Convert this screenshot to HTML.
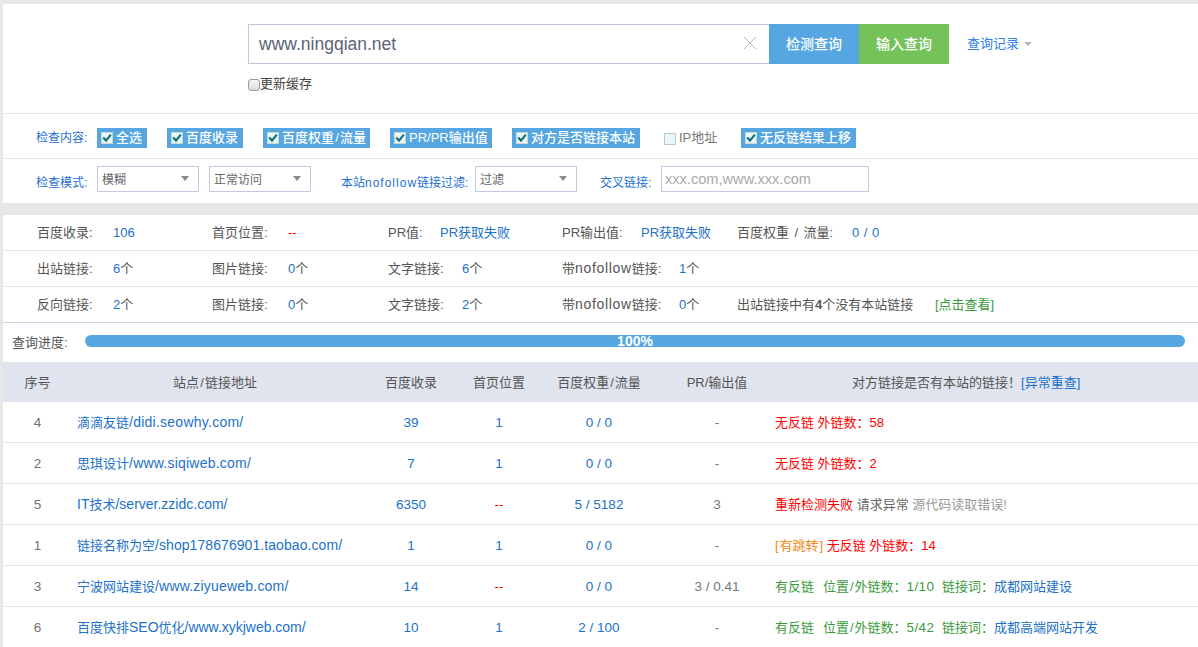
<!DOCTYPE html>
<html lang="zh-CN">
<head>
<meta charset="utf-8">
<title>友情链接检测</title>
<style>
*{box-sizing:border-box;margin:0;padding:0}
html,body{width:1198px;height:647px;overflow:hidden}
body{background:#e7e7e7;font-family:"Liberation Sans","Noto Sans CJK SC",sans-serif;font-size:13px;color:#555;position:relative}
.abs{position:absolute;white-space:nowrap}
.panel{position:absolute;background:#fff;left:3px;right:0}
.hl{position:absolute;left:3px;right:0;height:1px;background:#e8e8e8}
.t{position:absolute;white-space:nowrap;line-height:20px;height:20px}
.blue{color:#2271c8}
.lab{color:#1f6fd2;font-size:12px}
.red{color:#f00 !important}
.green{color:#3c9a3c}
.gray{color:#999}
.chip{position:absolute;top:128px;height:20px;background:#55a6e1;color:#fff;font-size:13px;font-weight:500;line-height:20px;white-space:nowrap}
.chip .cb{position:absolute;left:4px;top:4px;width:12px;height:12px;background:#eef6f4;border:1px solid #c5d8d2;}
.chip .cb svg{position:absolute;left:0;top:0}
.chip span{position:absolute;left:19px;top:0}
.chip em{font-style:normal;margin:0 1.2px}
.sel{position:absolute;top:166px;height:26px;border:1px solid #c2cae0;background:#fff;font-size:12px;color:#666;line-height:26px;padding-left:4px}
.sel i{position:absolute;right:9px;top:9px;width:0;height:0;border-left:4px solid transparent;border-right:4px solid transparent;border-top:5px solid #8a8a8a}
.th{position:absolute;top:373px;height:20px;line-height:20px;font-size:13px;color:#555;text-align:center;white-space:nowrap}
.row{position:absolute;left:3px;right:0;height:41px;border-bottom:1px solid #e8e8e8;font-size:13px}
.row div{position:absolute;top:11px;height:20px;line-height:20px;white-space:nowrap}
.c1{left:0;width:69px;text-align:center;color:#707070;font-size:13.5px}
.c2{left:74px;color:#2271c8}
.c3{left:355px;width:106px;text-align:center;color:#2271c8;font-size:13.5px}
.c4{left:461px;width:70px;text-align:center;color:#2271c8;font-size:13.5px}
.c5{left:531px;width:130px;text-align:center;color:#2271c8;font-size:13.5px}
.c6{left:661px;width:106px;text-align:center;color:#777;font-size:13.5px}
.c7{left:772px}
.d{font-size:13.5px;letter-spacing:.45px;line-height:0}
.L{font-size:14px;line-height:0}
</style>
</head>
<body>
<!-- top panel -->
<div class="panel" style="top:4px;height:199px"></div>
<div class="hl" style="top:113px"></div>
<div class="hl" style="top:158px"></div>

<!-- search -->
<div class="abs" style="left:248px;top:24px;width:521px;height:40px;border:1px solid #bec7de;border-right:none;background:#fff"></div>
<div class="t" style="left:259px;top:33px;font-size:17.5px;line-height:22px;height:22px;color:#5a6478">www.ningqian.net</div>
<svg class="abs" style="left:743px;top:36px" width="14" height="14" viewBox="0 0 14 14"><path d="M1 1L13 13M13 1L1 13" stroke="#b4b4b4" stroke-width="1" fill="none"/></svg>
<div class="abs" style="left:769px;top:24px;width:90px;height:40px;background:#55a6e1;color:#fff;font-size:14px;line-height:40px;text-align:center;font-weight:500">检测查询</div>
<div class="abs" style="left:859px;top:24px;width:90px;height:40px;background:#75c25b;color:#fff;font-size:14px;line-height:40px;text-align:center;font-weight:500">输入查询</div>
<div class="t" style="left:967px;top:34px;color:#2f80e8;font-size:13px">查询记录</div>
<div class="abs" style="left:1024px;top:42px;width:0;height:0;border-left:4px solid transparent;border-right:4px solid transparent;border-top:4px solid #b5b5b5"></div>
<div class="abs" style="left:248px;top:79px;width:12px;height:12px;border:1px solid #9a9a9a;border-radius:3px;background:linear-gradient(#f4f4f4,#dcdcdc)"></div>
<div class="t" style="left:260px;top:74px;font-size:13px;color:#444">更新缓存</div>

<!-- options row 1 -->
<div class="t lab" style="left:36px;top:128px">检查内容:</div>
<div class="chip" style="left:97px;width:50px"><div class="cb"><svg width="10" height="10" viewBox="0 0 10 10"><path d="M1.2 4.6L4 7.6L8.8 1.6" stroke="#0b7285" stroke-width="2.2" fill="none"/></svg></div><span>全选</span></div>
<div class="chip" style="left:167px;width:76px"><div class="cb"><svg width="10" height="10" viewBox="0 0 10 10"><path d="M1.2 4.6L4 7.6L8.8 1.6" stroke="#0b7285" stroke-width="2.2" fill="none"/></svg></div><span>百度收录</span></div>
<div class="chip" style="left:263px;width:107px"><div class="cb"><svg width="10" height="10" viewBox="0 0 10 10"><path d="M1.2 4.6L4 7.6L8.8 1.6" stroke="#0b7285" stroke-width="2.2" fill="none"/></svg></div><span>百度权重<em>/</em>流量</span></div>
<div class="chip" style="left:390px;width:102px"><div class="cb"><svg width="10" height="10" viewBox="0 0 10 10"><path d="M1.2 4.6L4 7.6L8.8 1.6" stroke="#0b7285" stroke-width="2.2" fill="none"/></svg></div><span>PR/PR输出值</span></div>
<div class="chip" style="left:512px;width:128px"><div class="cb"><svg width="10" height="10" viewBox="0 0 10 10"><path d="M1.2 4.6L4 7.6L8.8 1.6" stroke="#0b7285" stroke-width="2.2" fill="none"/></svg></div><span>对方是否链接本站</span></div>
<div class="abs" style="left:664px;top:133px;width:12px;height:12px;background:#ecf4f5;border:1px solid #b4cdd3"></div>
<div class="t" style="left:679px;top:128px;font-size:13px;color:#777">IP地址</div>
<div class="chip" style="left:741px;width:115px"><div class="cb"><svg width="10" height="10" viewBox="0 0 10 10"><path d="M1.2 4.6L4 7.6L8.8 1.6" stroke="#0b7285" stroke-width="2.2" fill="none"/></svg></div><span>无反链结果上移</span></div>

<!-- options row 2 -->
<div class="t lab" style="left:36px;top:173px">检查模式:</div>
<div class="sel" style="left:97px;width:102px">模糊<i></i></div>
<div class="sel" style="left:209px;width:102px">正常访问<i></i></div>
<div class="t lab" style="left:341px;top:173px">本站<span style="letter-spacing:1px">nofollow</span>链接过滤:</div>
<div class="sel" style="left:475px;width:102px">过滤<i></i></div>
<div class="t lab" style="left:600px;top:173px">交叉链接:</div>
<div class="abs" style="left:661px;top:166px;width:208px;height:26px;border:1px solid #c2cae0;background:#fff;font-size:14.6px;line-height:25px;color:#aaa;padding-left:3px">xxx.com,www.xxx.com</div>

<!-- stats panel -->
<div class="panel" style="top:215px;height:432px"></div>
<div class="hl" style="top:250px"></div>
<div class="hl" style="top:286px"></div>
<div class="hl" style="top:322px;background:#cdd4ea"></div>

<div class="t" style="left:37px;top:223px">百度收录:</div><div class="t blue" style="left:113px;top:223px">106</div>
<div class="t" style="left:212px;top:223px">首页位置:</div><div class="t red" style="left:288px;top:223px">--</div>
<div class="t" style="left:388px;top:223px">PR值:</div><div class="t blue" style="left:440px;top:223px">PR获取失败</div>
<div class="t" style="left:562px;top:223px">PR输出值:</div><div class="t blue" style="left:641px;top:223px">PR获取失败</div>
<div class="t" style="left:737px;top:223px">百度权重 <span style="margin:0 1.8px">/</span> 流量:</div><div class="t blue" style="left:852px;top:223px">0 <span style="margin:0 1px">/</span> 0</div>

<div class="t" style="left:37px;top:259px">出站链接:</div><div class="t" style="left:113px;top:259px"><span class="blue">6</span>个</div>
<div class="t" style="left:212px;top:259px">图片链接:</div><div class="t" style="left:288px;top:259px"><span class="blue">0</span>个</div>
<div class="t" style="left:388px;top:259px">文字链接:</div><div class="t" style="left:462px;top:259px"><span class="blue">6</span>个</div>
<div class="t" style="left:562px;top:259px">带<span style="font-size:14px;letter-spacing:.66px;line-height:0">nofollow</span>链接:</div><div class="t" style="left:679px;top:259px"><span class="blue">1</span>个</div>

<div class="t" style="left:37px;top:295px">反向链接:</div><div class="t" style="left:113px;top:295px"><span class="blue">2</span>个</div>
<div class="t" style="left:212px;top:295px">图片链接:</div><div class="t" style="left:288px;top:295px"><span class="blue">0</span>个</div>
<div class="t" style="left:388px;top:295px">文字链接:</div><div class="t" style="left:462px;top:295px"><span class="blue">2</span>个</div>
<div class="t" style="left:562px;top:295px">带<span style="font-size:14px;letter-spacing:.66px;line-height:0">nofollow</span>链接:</div><div class="t" style="left:679px;top:295px"><span class="blue">0</span>个</div>
<div class="t" style="left:737px;top:295px">出站链接中有<b>4</b>个没有本站链接</div>
<div class="t green" style="left:935px;top:295px">[点击查看]</div>

<!-- progress -->
<div class="t" style="left:12px;top:333px">查询进度:</div>
<div class="abs" style="left:85px;top:335px;width:1100px;height:12px;border-radius:6px;background:#55a6e1;color:#fff;font-size:14px;font-weight:bold;line-height:12px;text-align:center">100%</div>

<!-- table header -->
<div class="abs" style="left:3px;right:0;top:362px;height:40px;background:#e0e4ef"></div>
<div class="th" style="left:3px;width:69px">序号</div>
<div class="th" style="left:72px;width:286px">站点<span style="margin:0 1.2px">/</span>链接地址</div>
<div class="th" style="left:358px;width:106px">百度收录</div>
<div class="th" style="left:464px;width:70px">首页位置</div>
<div class="th" style="left:534px;width:130px">百度权重<span style="margin:0 .9px">/</span>流量</div>
<div class="th" style="left:664px;width:106px">PR/输出值</div>
<div class="th" style="left:852px">对方链接是否有本站的链接！<span class="blue">[异常重查]</span></div>

<!-- rows -->
<div class="row" style="top:402px"><div class="c1">4</div><div class="c2">滴滴友链<span class="L" style="letter-spacing:0.25px">/didi.seowhy.com/</span></div><div class="c3">39</div><div class="c4">1</div><div class="c5">0 / 0</div><div class="c6">-</div><div class="c7 red">无反链 外链数：58</div></div>
<div class="row" style="top:443px"><div class="c1">2</div><div class="c2">思琪设计<span class="L" style="letter-spacing:0.22px">/www.siqiweb.com/</span></div><div class="c3">7</div><div class="c4">1</div><div class="c5">0 / 0</div><div class="c6">-</div><div class="c7 red">无反链 外链数：2</div></div>
<div class="row" style="top:484px"><div class="c1">5</div><div class="c2"><span class="L" style="letter-spacing:0.00px">IT</span>技术<span class="L" style="letter-spacing:0.00px">/server.zzidc.com/</span></div><div class="c3">6350</div><div class="c4 red">--</div><div class="c5">5 / 5182</div><div class="c6">3</div><div class="c7"><span class="red">重新检测失败</span> <span style="color:#666">请求异常</span> <span class="gray">源代码读取错误!</span></div></div>
<div class="row" style="top:525px"><div class="c1">1</div><div class="c2">链接名称为空<span class="L" style="letter-spacing:0.07px">/shop178676901.taobao.com/</span></div><div class="c3">1</div><div class="c4">1</div><div class="c5">0 / 0</div><div class="c6">-</div><div class="c7"><span style="color:#f08a1c">[<span style="margin:0 .9px">有跳转</span>]</span> <span class="red">无反链 外链数：14</span></div></div>
<div class="row" style="top:566px"><div class="c1">3</div><div class="c2">宁波网站建设<span class="L" style="letter-spacing:0.20px">/www.ziyueweb.com/</span></div><div class="c3">14</div><div class="c4 red">--</div><div class="c5">0 / 0</div><div class="c6">3 / 0.41</div><div class="c7 green">有反链<span style="margin-left:9px">位置<span style="margin:0 .9px">/</span>外链数：</span><span class="d">1/10</span><span style="margin-left:7.5px">链接词：</span><span class="blue">成都网站建设</span></div></div>
<div class="row" style="top:607px"><div class="c1">6</div><div class="c2">百度快排<span class="L" style="letter-spacing:-0.02px">SEO</span>优化<span class="L" style="letter-spacing:-0.02px">/www.xykjweb.com/</span></div><div class="c3">10</div><div class="c4">1</div><div class="c5">2 / 100</div><div class="c6">-</div><div class="c7 green">有反链<span style="margin-left:9px">位置<span style="margin:0 .9px">/</span>外链数：</span><span class="d">5/42</span><span style="margin-left:7.5px">链接词：</span><span class="blue">成都高端网站开发</span></div></div>
</body>
</html>
